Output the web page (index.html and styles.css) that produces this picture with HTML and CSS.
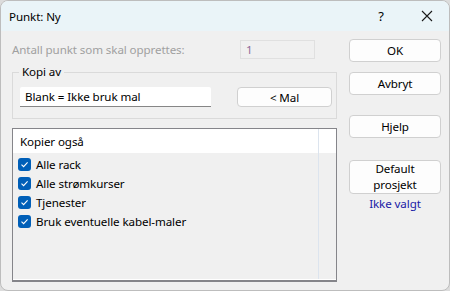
FILE: index.html
```html
<!DOCTYPE html>
<html>
<head>
<meta charset="utf-8">
<link rel="stylesheet" href="styles.css">
</head>
<body>
<div class="window">
  <div class="titlebar">
    <span class="title">Punkt: Ny</span>
    <span class="help">?</span>
    <svg class="close" width="12" height="12" viewBox="0 0 12 12"><path d="M1 1 L11 11 M11 1 L1 11" stroke="#1a1a1a" stroke-width="1.1" fill="none"/></svg>
  </div>
  <div class="content">
    <div class="left">
      <div class="count-row">
        <span class="muted">Antall punkt som skal opprettes:</span>
        <div class="count-input">1</div>
      </div>
      <div class="group">
        <div class="group-label">Kopi av</div>
        <div class="group-row">
          <div class="text-input">Blank = Ikke bruk mal</div>
          <div class="btn mal">&lt; Mal</div>
        </div>
      </div>
      <div class="listview">
        <div class="lv-header"><span>Kopier også</span></div>
        <div class="lv-body">
          <div class="lv-item"><span class="cb"><svg width="9" height="9" viewBox="0 0 9 9"><path d="M1.5 4.6 L3.6 6.6 L7.6 2.4" stroke="#fff" stroke-width="1.1" fill="none"/></svg></span>Alle rack</div>
          <div class="lv-item"><span class="cb"><svg width="9" height="9" viewBox="0 0 9 9"><path d="M1.5 4.6 L3.6 6.6 L7.6 2.4" stroke="#fff" stroke-width="1.1" fill="none"/></svg></span>Alle strømkurser</div>
          <div class="lv-item"><span class="cb"><svg width="9" height="9" viewBox="0 0 9 9"><path d="M1.5 4.6 L3.6 6.6 L7.6 2.4" stroke="#fff" stroke-width="1.1" fill="none"/></svg></span>Tjenester</div>
          <div class="lv-item"><span class="cb"><svg width="9" height="9" viewBox="0 0 9 9"><path d="M1.5 4.6 L3.6 6.6 L7.6 2.4" stroke="#fff" stroke-width="1.1" fill="none"/></svg></span>Bruk eventuelle kabel-maler</div>
        </div>
      </div>
    </div>
    <div class="right">
      <div class="btn rb ok">OK</div>
      <div class="btn rb avbryt">Avbryt</div>
      <div class="btn rb hjelp">Hjelp</div>
      <div class="btn rb default">Default<br>prosjekt</div>
      <div class="link">Ikke valgt</div>
    </div>
  </div>
</div>
</body>
</html>
```

FILE: styles.css
```css
html, body {
  margin: 0;
  padding: 0;
  background: #dcdcdc;
}
body {
  width: 450px;
  height: 291px;
  overflow: hidden;
  font-family: "Noto Sans", "Liberation Sans", sans-serif;
  font-size: 11.6px;
  letter-spacing: -0.1px;
  color: #000;
}
.window {
  width: 448px;
  height: 289px;
  border: 1px solid #bdbdbd;
  border-radius: 8px;
  background: #f0f0f0;
  overflow: hidden;
}
.titlebar {
  height: 30px;
  background: #eaf4f8;
  display: flex;
  align-items: center;
  position: relative;
}
.title {
  margin-left: 8px;
  flex: 1;
  margin-top: 1px;
}
.help {
  width: 12px;
  text-align: center;
  margin-right: 34px;
  font-size: 13px;
}
.close {
  margin-right: 16px;
}
.content {
  display: flex;
  padding: 8px 0 0 11px;
}
.left {
  width: 325px;
  display: flex;
  flex-direction: column;
}
.count-row {
  display: flex;
  align-items: center;
  height: 19px;
  padding-top: 1px;
}
.muted {
  color: #a0a0a0;
  width: 228px;
}
.count-input {
  width: 68px;
  height: 17px;
  border: 1px solid #e0e0e0;
  color: #8e6a9a;
  padding-left: 5px;
  line-height: 17px;
}
.group {
  margin-top: 13px;
  border: 1px solid #dadada;
  height: 45px;
  position: relative;
}
.group-label {
  position: absolute;
  left: 6px;
  top: -9px;
  background: #f0f0f0;
  padding: 0 3px;
  line-height: 16px;
}
.group-row {
  display: flex;
  align-items: center;
  padding: 14px 0 0 7px;
}
.text-input {
  width: 186px;
  height: 19px;
  background: #fff;
  border-bottom: 1px solid #868686;
  padding-left: 5px;
  line-height: 19px;
  border-radius: 2px 2px 0 0;
}
.btn {
  box-sizing: border-box;
  background: #fdfdfd;
  border: 1px solid #d0d0d0;
  border-radius: 4px;
  text-align: center;
  display: flex;
  align-items: center;
  justify-content: center;
}
.mal {
  width: 95px;
  height: 20px;
  margin-left: 26px;
}
.listview {
  margin-top: 9px;
  width: 325px;
  height: 154px;
  box-sizing: border-box;
  border: 1px solid #85858a;
  border-bottom: 2px solid #85858a;
  position: relative;
  background: #f0f0f0;
  box-shadow: inset 0 -1px 0 #fff;
}
.listview::after {
  content: "";
  position: absolute;
  left: 305px;
  top: 0;
  bottom: 1px;
  width: 1px;
  background: #dce4ee;
}
.lv-header {
  height: 24px;
  background: #fff;
  display: flex;
  align-items: center;
  padding-left: 7px;
}
.lv-body {
  padding-top: 2px;
}
.lv-item {
  height: 19px;
  display: flex;
  align-items: center;
  padding-left: 5px;
}
.cb {
  width: 13px;
  height: 13px;
  border-radius: 3px;
  background: #005fb8;
  display: flex;
  align-items: center;
  justify-content: center;
  margin-right: 5px;
}
.right {
  margin-left: 12px;
  width: 92px;
  display: flex;
  flex-direction: column;
}
.rb {
  width: 92px;
  height: 23px;
}
.avbryt {
  margin-top: 10px;
}
.hjelp {
  margin-top: 20px;
}
.default {
  margin-top: 22px;
  height: 34px;
  line-height: 16px;
}
.link {
  text-align: center;
  color: #1a1aa6;
  margin-top: 2px;
}
```
